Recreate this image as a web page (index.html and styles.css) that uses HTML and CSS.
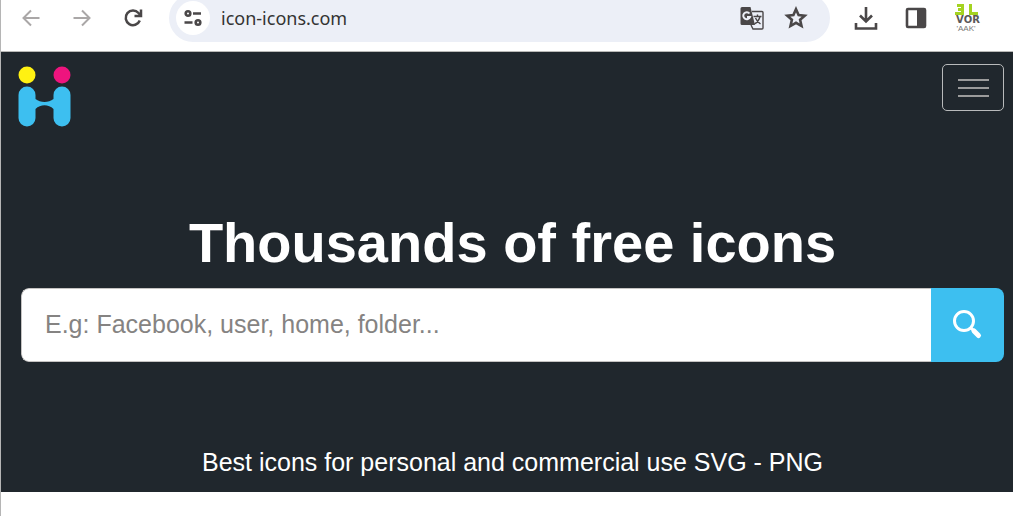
FILE: index.html
```html
<!DOCTYPE html>
<html lang="en">
<head>
    <meta charset="UTF-8">
    <meta name="viewport" content="width=device-width, initial-scale=1.0">
    <title>Thousands of free icons</title>
    <link rel="stylesheet" href="styles.css">
</head>
<body>
    <div class="toolbar">
        <div class="nav-buttons">
            <button class="tool-btn disabled" type="button" aria-label="Back">
                <svg width="20" height="20" viewBox="0 0 20 20"><path d="M18.500 10H2.500M10 2.500L2.500 10l7.500 7.500"/></svg>
            </button>
            <button class="tool-btn disabled" type="button" aria-label="Forward">
                <svg width="20" height="20" viewBox="0 0 20 20"><path d="M1.500 10h16M10 2.500L17.500 10 10 17.500"/></svg>
            </button>
            <button class="tool-btn" type="button" aria-label="Reload">
                <svg width="20" height="20" viewBox="0 0 20 20"><path d="M16.800 12.500A7.300 7.300 0 1 1 15.500 5L18 8"/><path d="M18 1.500V8H11.500"/></svg>
            </button>
        </div>

        <div class="address-bar">
            <button class="site-info" type="button" aria-label="Site information">
                <svg width="20" height="20" viewBox="0 0 20 20"><g class="medium"><circle cx="5" cy="5.500" r="2.300"/><path d="M10 5.500h8M1.500 14.500h8"/><circle cx="15" cy="14.500" r="2.300"/></g></svg>
            </button>
            <input class="url" type="text" value="icon-icons.com" aria-label="Address">
            <button class="tool-btn" type="button" aria-label="Translate">
                <svg width="24" height="24" viewBox="0 0 24 24">
                    <path class="solid" d="M2 1h8.500l4.500 18H2a1.500 1.500 0 0 1-1.500-1.500v-15A1.500 1.500 0 0 1 2 1z"/>
                    <path class="light" d="M9.500 7.500A3.500 3.500 0 1 0 10 11H7"/>
                    <path class="thin" d="M12 5.500h10a1 1 0 0 1 1 1v15.500a1 1 0 0 1-1 1h-9l-2-4M13.500 10.500h8M17.500 8.500v2M20 10.500c-.8 3.500-3 6-5.500 7.500M15.500 12c1 2.500 3 4.500 5 6"/>
                </svg>
            </button>
            <button class="tool-btn" type="button" aria-label="Bookmark">
                <svg width="24" height="24" viewBox="0 0 24 24"><path class="medium" d="M12 3.200l2.600 5.900 6.100.6-4.600 4.100 1.400 6.200-5.500-3.200-5.500 3.200 1.400-6.200-4.600-4.100 6.100-.6z"/></svg>
            </button>
        </div>

        <div class="extras">
            <button class="tool-btn" type="button" aria-label="Downloads">
                <svg width="24" height="24" viewBox="0 0 24 24"><path class="medium" d="M12 1v14M6 9.500l6 6 6-6M2 17v5.500h20V17"/></svg>
            </button>
            <button class="tool-btn" type="button" aria-label="Side panel">
                <svg width="24" height="24" viewBox="0 0 24 24"><rect class="medium" x="3" y="3" width="18" height="18" rx="1"/><path class="solid" d="M13 3h8v18h-8z"/></svg>
            </button>
            <button class="tool-btn" type="button" aria-label="Profile">
                <svg class="profile" width="28" height="30" viewBox="0 0 28 30">
                    <path class="lime" d="M3 2.500h5.500v8H1M4 6.500h4.500M16.500 1v9.500H24"/>
                    <text class="mark" x="14" y="20" text-anchor="middle">VOR</text>
                    <text class="submark" x="12" y="28" text-anchor="middle">'AAK'</text>
                </svg>
            </button>
        </div>
    </div>

    <div class="hero">
        <div class="header">
            <a class="logo" href="#" aria-label="Home">
                <svg width="54" height="62" viewBox="0 0 54 62">
                    <circle cx="9" cy="9" r="8.500" fill="#fff112"/>
                    <circle cx="44" cy="9" r="8.500" fill="#ee147e"/>
                    <path fill="#3dbff0" d="M.5 29a8.500 8.500 0 0 1 17 0v4c5 4 13 4 18 0v-4a8.500 8.500 0 0 1 17 0v23a8.500 8.500 0 0 1-17 0V43c-5-5-13-5-18 0v9a8.500 8.500 0 0 1-17 0z"/>
                </svg>
            </a>
            <button class="menu-btn" type="button" aria-label="Menu">
                <span></span>
                <span></span>
                <span></span>
            </button>
        </div>

        <h1>Thousands of free icons</h1>

        <form class="search" onsubmit="return false">
            <input type="text" placeholder="E.g: Facebook, user, home, folder..." aria-label="Search icons">
            <button type="submit" aria-label="Search">
                <svg width="32" height="32" viewBox="0 0 32 32"><circle cx="12" cy="12" r="9.500"/><path d="M19 19l3 3"/><path class="handle" d="M22 22l4.500 4.500"/></svg>
            </button>
        </form>

        <p class="tagline">Best icons for personal and commercial use SVG - PNG</p>
    </div>
</body>
</html>
```

FILE: styles.css
```css
* {
    box-sizing: border-box;
}

html {
    background: #fff;
}

body {
    margin: 0;
    border-left: 1px solid #b5b5b5;
    min-height: 100vh;
    font-family: "Liberation Sans", Arial, sans-serif;
}

button {
    padding: 0;
    border: none;
    background: none;
    cursor: pointer;
}

svg {
    display: block;
    fill: none;
    stroke: #4a4748;
    stroke-width: 2.500;
}

.toolbar {
    display: flex;
    height: 52px;
    overflow: hidden;
    border-bottom: 1px solid #b9b9b7;
}

.nav-buttons {
    display: flex;
    gap: 31px;
    height: 36px;
    padding: 0 26px 0 20px;
}

.tool-btn {
    display: flex;
    align-items: center;
}

.disabled svg {
    stroke: #aaa7a7;
    stroke-width: 2;
}

.medium {
    stroke-width: 2.600;
}

.thin {
    stroke-width: 1.400;
}

.solid {
    fill: #4a4748;
    stroke: none;
}

.light {
    stroke: #edeff7;
    stroke-width: 2;
}

/* the pill runs past the top edge of the bar */
.address-bar {
    flex: 1;
    display: flex;
    align-items: center;
    gap: 20px;
    height: 48px;
    margin-top: -6px;
    padding: 0 22px 0 7px;
    border-radius: 24px;
    background: #eceff7;
}

.site-info {
    display: flex;
    align-items: center;
    justify-content: center;
    width: 34px;
    height: 34px;
    border-radius: 50%;
    background: #fff;
}

.url {
    flex: 1;
    min-width: 0;
    margin-left: -9px;
    padding: 0;
    border: none;
    outline: none;
    background: none;
    color: #333;
    font: 18px "Noto Sans", sans-serif;
}

.extras {
    display: flex;
    gap: 26px;
    height: 36px;
    padding: 0 31px 0 24px;
}

.profile .lime {
    stroke: #a4d321;
    stroke-width: 3;
}

.mark,
.submark {
    stroke: none;
}

.mark {
    fill: #5a5758;
    font: bold 10px "DejaVu Sans", sans-serif;
}

.submark {
    fill: #777;
    font: 8px "Liberation Sans", Arial, sans-serif;
}

.hero {
    margin-left: -1px;
    padding: 12px 9px 12px 21px;
    background: #20272d;
    color: #fff;
    text-align: center;
}

.header {
    display: flex;
    justify-content: space-between;
    align-items: flex-start;
    margin-left: -3px;
}

.logo svg {
    margin-top: 2px;
    stroke: none;
}

.menu-btn {
    display: flex;
    flex-direction: column;
    align-items: center;
    justify-content: center;
    gap: 6px;
    width: 62px;
    height: 47px;
    border: 1px solid #b8babb;
    border-radius: 5px;
}

.menu-btn span {
    width: 31px;
    height: 2px;
    background: #9b9b9b;
}

h1 {
    margin: 83px 0 13px;
    font-size: 56px;
    line-height: 64px;
}

.search {
    display: flex;
    height: 74px;
    overflow: hidden;
    border-radius: 8px;
}

.search input {
    flex: 1;
    min-width: 0;
    padding: 0 23px 2px;
    border: 1px solid #c5c3c2;
    border-right: none;
    border-radius: 8px 0 0 8px;
    outline: none;
    background: #fff;
    color: #333;
    font: 25px "Liberation Sans", Arial, sans-serif;
}

.search input::placeholder {
    color: #858382;
}

.search button {
    display: flex;
    align-items: center;
    justify-content: center;
    width: 73px;
    background: #3dbff0;
}

.search svg {
    stroke: #fff;
    stroke-width: 3;
}

.search .handle {
    stroke-width: 5;
    stroke-linecap: round;
}

.tagline {
    margin: 83px 0 0;
    padding-bottom: 1px;
    font-size: 25px;
    line-height: 34px;
}
```
